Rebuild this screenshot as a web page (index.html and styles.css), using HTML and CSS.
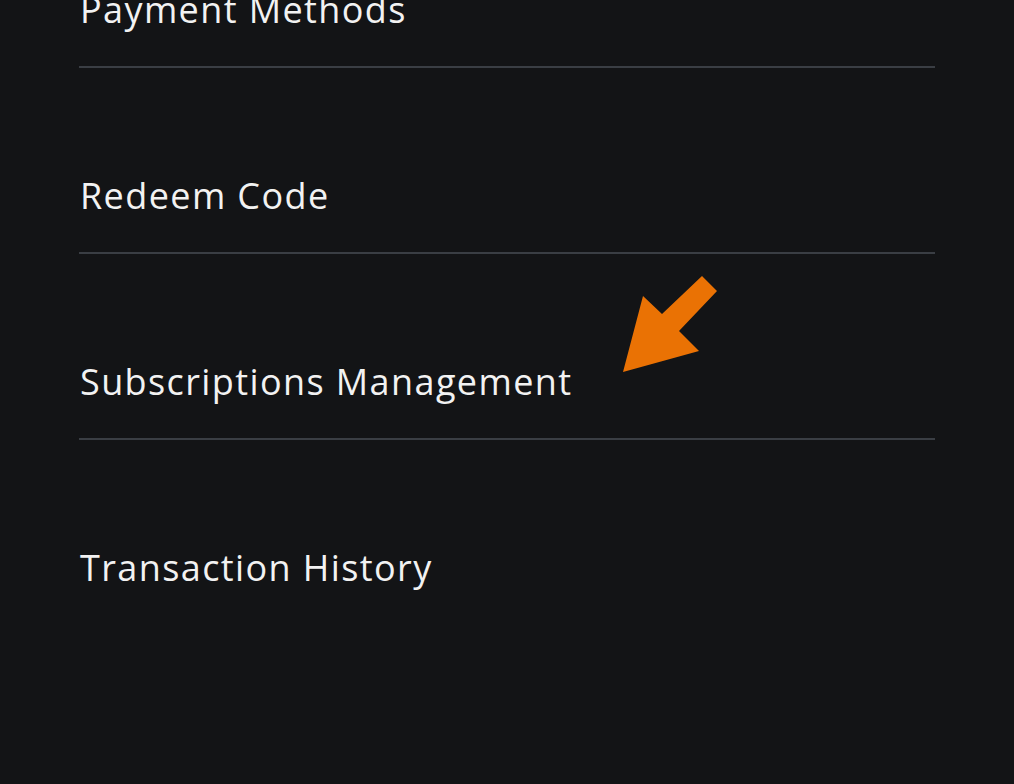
FILE: index.html
```html
<!DOCTYPE html>
<html lang="en">
<head>
    <meta charset="UTF-8">
    <meta name="viewport" content="width=device-width, initial-scale=1.0">
    <title>Payment and Subscriptions</title>
    <link rel="stylesheet" href="styles.css">
</head>
<body>
    <ul class="menu">
        <li class="menu-item">Payment Methods</li>
        <li class="menu-item">Redeem Code</li>
        <li class="menu-item">
            Subscriptions Management
            <!-- Callout arrow -->
            <svg class="callout" width="100" height="100" viewBox="0 0 100 100">
                <polygon points="1,97 21,21 40,39 80,1 95,16 57,56 77,76" fill="#ea7204"/>
            </svg>
        </li>
        <li class="menu-item last">Transaction History</li>
    </ul>
</body>
</html>
```

FILE: styles.css
```css
html, body {
    margin: 0;
    padding: 0;
    background-color: #131416;
    height: 100%;
    overflow: hidden;
}

body {
    font-family: "Open Sans", "DejaVu Sans", sans-serif;
    color: #f2f2f2;
}

.menu {
    list-style: none;
    margin: -118px 0 0 79px;
    padding: 0;
    width: 856px;
}

.menu-item {
    position: relative;
    padding: 106px 0 34px 1px;
    height: 44px;
    line-height: 44px;
    font-size: 36px;
    letter-spacing: 1.4px;
    border-bottom: 2px solid #3a3e44;
}

.menu-item.last {
    border-bottom: none;
}

/* arrow pointing at the subscriptions row */
.callout {
    position: absolute;
    left: 543px;
    top: 21px;
}
```
